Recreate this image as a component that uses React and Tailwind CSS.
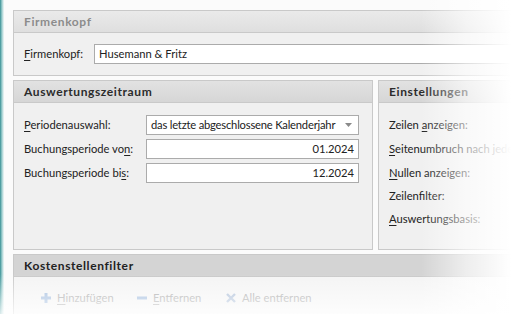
import React from "react";

const U = ({ children }) => <span className="underline underline-offset-2">{children}</span>;

function Header({ children, muted }) {
  return (
    <div
      className={`h-[22px] leading-[21px] px-[10px] border-b border-[#c9c9c9] bg-gradient-to-b font-bold text-[12px] tracking-[0.6px] whitespace-nowrap ${
        muted ? "text-[#8c8c8c] from-[#eaeaea] to-[#dfdfdf]" : "text-[#2b2b2b] from-[#e2e2e2] to-[#d6d6d6]"
      }`}
    >
      {children}
    </div>
  );
}

function Row({ label, children }) {
  return (
    <div className="flex items-center h-[20px]">
      <div className="w-[122px] shrink-0 whitespace-nowrap">{label}</div>
      {children}
    </div>
  );
}

function Input({ value, right, arrow }) {
  return (
    <div
      className={`w-[213px] h-[20px] border border-[#ababab] bg-white flex items-center px-[4px] whitespace-nowrap ${
        right ? "justify-end" : "justify-between"
      }`}
    >
      <span className={arrow ? "tracking-[-0.2px]" : ""}>{value}</span>
      {arrow && (
        <svg width="7" height="4" viewBox="0 0 7 4" className="mr-[2px] shrink-0">
          <path d="M0 0 L7 0 L3.5 4 Z" fill="#8a8a8a" />
        </svg>
      )}
    </div>
  );
}

export default function App() {
  return (
    <div
      className="relative w-[511px] h-[314px] overflow-hidden bg-[#fbfbfb] text-[11.2px] text-[#222]"
      style={{ fontFamily: 'Lato, "Open Sans", sans-serif' }}
    >
      <div className="flex h-full">
        <div className="w-[4px] shrink-0 bg-gradient-to-r from-[#2f8f93] via-[#9fcfd0] to-[#f4f8f8]" />
        <div className="flex-1 pl-[9px] pt-[10px] flex flex-col gap-[4px]">
          {/* Firmenkopf */}
          <div className="border border-[#c9c9c9] bg-[#f0f0f0] w-[520px]">
            <Header muted>Firmenkopf</Header>
            <div className="h-[42px] flex items-center pl-[10px]">
              <div className="w-[70px] shrink-0 whitespace-nowrap">
                <U>F</U>irmenkopf:
              </div>
              <div className="flex-1 h-[20px] border border-[#ababab] border-r-0 bg-white flex items-center px-[4px] whitespace-nowrap">
                Husemann &amp; Fritz
              </div>
            </div>
          </div>

          {/* Middle */}
          <div className="flex gap-[5px] w-[520px]">
            <div className="w-[360px] h-[170px] border border-[#c9c9c9] bg-[#f0f0f0]">
              <Header>Auswertungszeitraum</Header>
              <div className="pl-[10px] pt-[12px] flex flex-col gap-[4px]">
                <Row
                  label={
                    <>
                      <U>P</U>eriodenauswahl:
                    </>
                  }
                >
                  <Input value="das letzte abgeschlossene Kalenderjahr" arrow />
                </Row>
                <Row
                  label={
                    <>
                      Buchungsperiode vo<U>n</U>:
                    </>
                  }
                >
                  <Input value="01.2024" right />
                </Row>
                <Row
                  label={
                    <>
                      Buchungsperiode bi<U>s</U>:
                    </>
                  }
                >
                  <Input value="12.2024" right />
                </Row>
              </div>
            </div>
            <div className="flex-1 h-[170px] border border-[#c9c9c9] bg-[#f0f0f0]">
              <Header>Einstellungen</Header>
              <div className="pl-[10px] pt-[10px] whitespace-nowrap">
                <div className="h-[24px] leading-[24px]">
                  Zeilen <U>a</U>nzeigen:
                </div>
                <div className="h-[24px] leading-[24px]">
                  <U>S</U>eitenumbruch nach jeder
                </div>
                <div className="h-[23px] leading-[23px]">
                  <U>N</U>ullen anzeigen:
                </div>
                <div className="h-[23px] leading-[23px]">Zeilenfilter:</div>
                <div className="h-[24px] leading-[24px]">
                  <U>A</U>uswertungsbasis:
                </div>
              </div>
            </div>
          </div>

          {/* Kostenstellenfilter */}
          <div className="flex-1 border border-[#c9c9c9] border-b-0 bg-[#f4f4f4] w-[520px]">
            <div className="h-[22px] leading-[21px] px-[10px] border-b border-[#c9c9c9] bg-[#d4d4d4] font-bold text-[12px] tracking-[0.6px] text-[#222]">
              Kostenstellenfilter
            </div>
            <div className="pl-[27px] pt-[13px] flex items-center text-[#a4a4a4] whitespace-nowrap">
              <div className="flex items-center gap-[6px] w-[96px]">
                <svg width="10" height="10" viewBox="0 0 10 10">
                  <path d="M3.5 0h3v3.5H10v3H6.5V10h-3V6.5H0v-3h3.5z" fill="#9bb8dc" />
                </svg>
                <span>
                  <U>H</U>inzufügen
                </span>
              </div>
              <div className="flex items-center gap-[6px] w-[89px]">
                <svg width="10" height="10" viewBox="0 0 10 10">
                  <path d="M0 3.5h10v3H0z" fill="#9bb8dc" />
                </svg>
                <span>
                  <U>E</U>ntfernen
                </span>
              </div>
              <div className="flex items-center gap-[6px]">
                <svg width="10" height="10" viewBox="0 0 10 10">
                  <path d="M1 1 L9 9 M9 1 L1 9" stroke="#a9bcd6" strokeWidth="2.4" />
                </svg>
                <span>
                  Alle ent<U>f</U>ernen
                </span>
              </div>
            </div>
          </div>
        </div>
      </div>

      {/* Fades */}
      <div className="pointer-events-none absolute top-0 right-0 h-full w-[90px] bg-gradient-to-r from-transparent via-white/60 to-white" />
      <div className="pointer-events-none absolute bottom-0 left-0 w-full h-[40px] bg-gradient-to-b from-transparent to-white/80" />
    </div>
  );
}
